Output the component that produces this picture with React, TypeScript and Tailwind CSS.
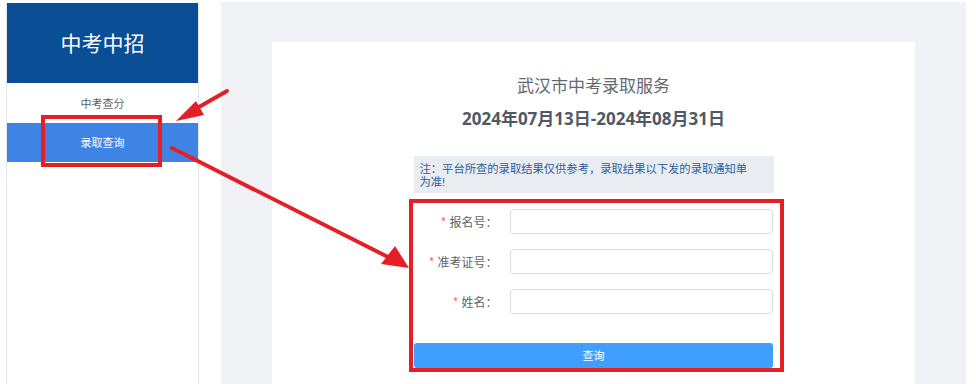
import React from "react";

const font = { fontFamily: '"Noto Sans CJK SC", "Open Sans", sans-serif' };

function Field({ label }: { label: string }) {
  return (
    <div className="flex items-center h-[25px]">
      <div className="w-[84px] text-right pr-[12px] text-[12px] text-[#606266] leading-none">
        <span className="text-[#f56c6c] mr-[3px]">*</span>
        {label}：
      </div>
      <div className="w-[263px] h-[25px] border border-[#dcdfe6] rounded-[4px] bg-white" />
    </div>
  );
}

export default function App() {
  return (
    <div className="relative w-[976px] h-[384px] bg-white overflow-hidden flex" style={font}>
      {/* Sidebar */}
      <div className="ml-[6px] mt-[3px] w-[193px] h-[381px] border-l border-r border-[#e4e6ea] flex flex-col">
        <div className="h-[80px] bg-[#0a4e96] flex items-center justify-center text-white text-[21px]">
          中考中招
        </div>
        <div className="h-[40px] flex items-center justify-center text-[11px] text-[#606266]">中考查分</div>
        <div className="h-[39px] bg-[#3f84e5] flex items-center justify-center text-[11px] text-white">录取查询</div>
      </div>

      {/* Main gray area */}
      <div className="ml-[22px] mt-[2px] w-[745px] h-[382px] bg-[#f0f2f5] pt-[40px] px-[51px]">
        <div className="w-[643px] h-[342px] bg-white flex flex-col items-center">
          <div className="mt-[32px] text-[17px] text-[#666a70] leading-[22px]">武汉市中考录取服务</div>
          <div
            className="mt-[11px] text-[17px] font-bold text-[#4f5966] leading-[24px]"
            style={{ fontFamily: '"Open Sans", "Noto Sans CJK SC", sans-serif' }}
          >
            2024年07月13日-2024年08月31日
          </div>
          <div
            className="mt-[25px] w-[360px] h-[37px] bg-[#e9edf2] px-[6px] pt-[7px] text-[11.3px] leading-[13px] text-[#2d5f9e]"
            style={{ fontFamily: '"Liberation Sans", "Noto Sans CJK SC", sans-serif' }}
          >
            <div>注：平台所查的录取结果仅供参考，录取结果以下发的录取通知单</div>
            <div>为准!</div>
          </div>
          <div className="mt-[16px] w-[360px] flex flex-col gap-[15px]">
            <div className="flex flex-col gap-[15px] pl-[12px]">
              <Field label="报名号" />
              <Field label="准考证号" />
              <Field label="姓名" />
            </div>
          </div>
          <div className="mt-[29px] w-[359px] h-[25px] bg-[#409eff] rounded-[3px] flex items-center justify-center text-white text-[11px]">
            查询
          </div>
        </div>
      </div>

      {/* Red highlight boxes */}
      <div className="absolute left-[41px] top-[115px] w-[121px] h-[52px] border-[4px] border-[#e41f26]" />
      <div className="absolute left-[409px] top-[199px] w-[375px] h-[173px] border-[4px] border-[#e41f26]" />

      {/* Arrows */}
      <svg className="absolute left-0 top-0 pointer-events-none" width="976" height="384" viewBox="0 0 976 384">
        <line x1="227" y1="91" x2="192" y2="111" stroke="#e41f26" strokeWidth="4" strokeLinecap="round" />
        <polygon points="176,121 196,101 204,115" fill="#e41f26" />
        <line x1="172" y1="148" x2="388" y2="257" stroke="#e41f26" strokeWidth="4" strokeLinecap="round" />
        <polygon points="409,268 381,264 395,246" fill="#e41f26" />
      </svg>
    </div>
  );
}
